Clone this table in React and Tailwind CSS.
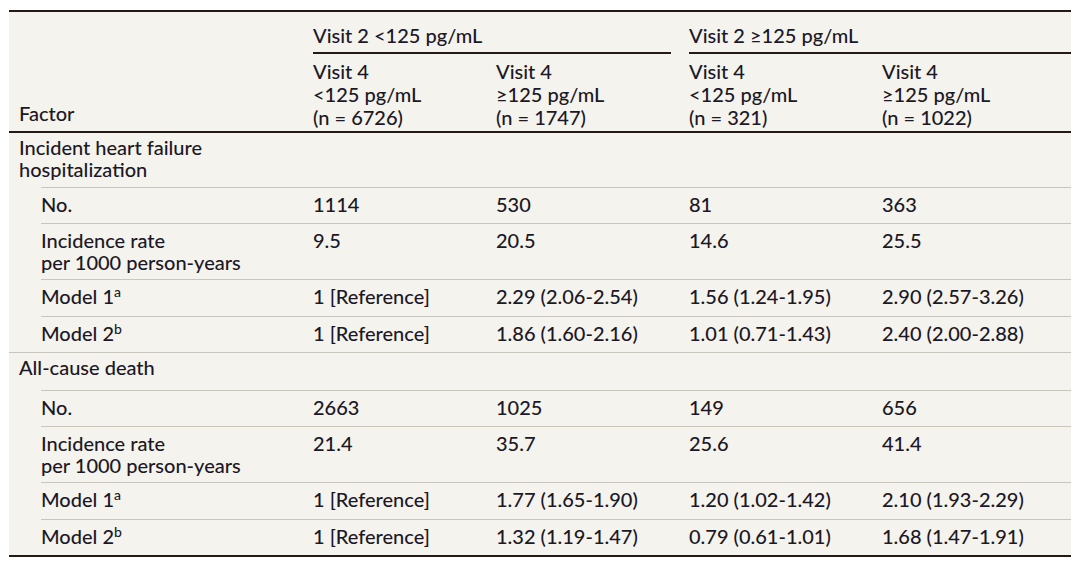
import React from 'react';

const groups = [
  {
    title: ['Incident heart failure', 'hospitalization'],
    h: 'h-[54px]',
    rows: [
      { label: ['No.'], h: 'h-[36px]', values: ['1114', '530', '81', '363'] },
      { label: ['Incidence rate', 'per 1000 person-years'], h: 'h-[56px]', values: ['9.5', '20.5', '14.6', '25.5'] },
      { label: ['Model 1'], sup: 'a', h: 'h-[37px]', values: ['1 [Reference]', '2.29 (2.06-2.54)', '1.56 (1.24-1.95)', '2.90 (2.57-3.26)'] },
      { label: ['Model 2'], sup: 'b', h: 'h-[36px]', values: ['1 [Reference]', '1.86 (1.60-2.16)', '1.01 (0.71-1.43)', '2.40 (2.00-2.88)'] },
    ],
  },
  {
    title: ['All-cause death'],
    h: 'h-[37px]',
    rows: [
      { label: ['No.'], h: 'h-[36px]', values: ['2663', '1025', '149', '656'] },
      { label: ['Incidence rate', 'per 1000 person-years'], h: 'h-[56px]', values: ['21.4', '35.7', '25.6', '41.4'] },
      { label: ['Model 1'], sup: 'a', h: 'h-[37px]', values: ['1 [Reference]', '1.77 (1.65-1.90)', '1.20 (1.02-1.42)', '2.10 (1.93-2.29)'] },
      { label: ['Model 2'], sup: 'b', h: 'h-[36px]', values: ['1 [Reference]', '1.32 (1.19-1.47)', '0.79 (0.61-1.01)', '1.68 (1.47-1.91)'] },
    ],
  },
];

const subHeads = [
  ['Visit 4', '<125 pg/mL', '(n = 6726)'],
  ['Visit 4', '≥125 pg/mL', '(n = 1747)'],
  ['Visit 4', '<125 pg/mL', '(n = 321)'],
  ['Visit 4', '≥125 pg/mL', '(n = 1022)'],
];

const App = () => {
  return (
    <div className="w-[1080px] h-[564px] bg-white pt-[10px] pl-[9px] text-[#1c1826]" style={{ fontFamily: 'Lato, "Liberation Sans", sans-serif' }}>
      <div className="w-[1062px] bg-[#f4f3ed] border-t-2 border-b-2 border-[#231916] text-[20px] leading-[22px] font-medium">
        {/* header */}
        <div className="grid grid-cols-[304px_183px_193px_193px_1fr] border-b-2 border-[#231916] h-[121px]">
          <div className="row-span-2 flex items-end pl-[10px] pb-[6px] leading-[23px]">Factor</div>
          <div className="col-span-2 mr-[18px] pt-[12px] pb-[5px] border-b-2 border-[#231916] h-[42px]">Visit 2 &lt;125 pg/mL</div>
          <div className="col-span-2 pt-[12px] pb-[5px] border-b-2 border-[#231916] h-[42px]">Visit 2 ≥125 pg/mL</div>
          {subHeads.map((lines, i) => (
            <div key={i} className="pt-[3px] leading-[23px]">
              {lines.map((l) => (
                <div key={l}>{l}</div>
              ))}
            </div>
          ))}
        </div>

        {/* body */}
        {groups.map((group, gi) => (
          <div key={gi} className={gi > 0 ? 'border-t border-[#c8c6bd]' : ''}>
            <div className={`${group.h} pl-[10px] pt-[3px]`}>
              {group.title.map((t) => (
                <div key={t}>{t}</div>
              ))}
            </div>
            {group.rows.map((row, ri) => (
              <div
                key={ri}
                className={`${row.h} ml-[32px] border-t border-[#c8c6bd] grid grid-cols-[272px_183px_193px_193px_1fr] pt-[5px]`}
              >
                <div>
                  {row.label.map((l, li) => (
                    <div key={l}>
                      {l}
                      {row.sup && li === 0 && <sup className="text-[14px] -top-[7px]">{row.sup}</sup>}
                    </div>
                  ))}
                </div>
                {row.values.map((v, vi) => (
                  <div key={vi}>{v}</div>
                ))}
              </div>
            ))}
          </div>
        ))}
      </div>
    </div>
  );
};

export default App;
